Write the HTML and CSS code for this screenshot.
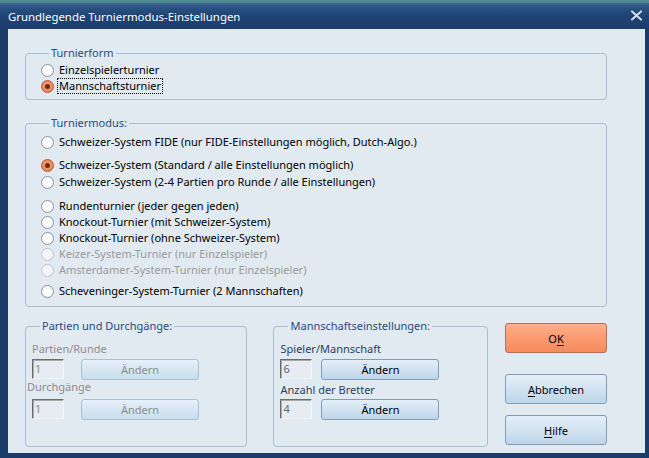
FILE: index.html
```html
<!DOCTYPE html>
<html lang="de">
<head>
<meta charset="utf-8">
<title>Grundlegende Turniermodus-Einstellungen</title>
<link rel="stylesheet" href="styles.css">
</head>
<body>
<div class="window">
  <div class="titlebar">
    <span class="title">Grundlegende Turniermodus-Einstellungen</span>
    <span class="close">
      <svg width="13" height="11" viewBox="0 0 13 11"><path d="M2 1.5 L11 9.5 M11 1.5 L2 9.5" stroke="#0d2240" stroke-width="3.2" stroke-linecap="round" fill="none" opacity="0.5"/><path d="M2 1.5 L11 9.5 M11 1.5 L2 9.5" stroke="#cfe0f1" stroke-width="2.2" stroke-linecap="round" fill="none"/></svg>
    </span>
  </div>
  <div class="client">
    <fieldset class="group g-form">
      <legend>Turnierform</legend>
      <div class="radio"><span class="dot"></span><span class="lbl">Einzelspielerturnier</span></div>
      <div class="radio checked"><span class="dot"></span><span class="lbl focus">Mannschaftsturnier</span></div>
    </fieldset>

    <fieldset class="group g-mode">
      <legend>Turniermodus:</legend>
      <div class="radio"><span class="dot"></span><span class="lbl">Schweizer-System FIDE (nur FIDE-Einstellungen möglich, Dutch-Algo.)</span></div>
      <div class="radio checked sp7"><span class="dot"></span><span class="lbl">Schweizer-System (Standard / alle Einstellungen möglich)</span></div>
      <div class="radio sp1"><span class="dot"></span><span class="lbl">Schweizer-System (2-4 Partien pro Runde / alle Einstellungen)</span></div>
      <div class="radio sp8"><span class="dot"></span><span class="lbl">Rundenturnier (jeder gegen jeden)</span></div>
      <div class="radio"><span class="dot"></span><span class="lbl">Knockout-Turnier (mit Schweizer-System)</span></div>
      <div class="radio"><span class="dot"></span><span class="lbl">Knockout-Turnier (ohne Schweizer-System)</span></div>
      <div class="radio disabled"><span class="dot"></span><span class="lbl">Keizer-System-Turnier (nur Einzelspieler)</span></div>
      <div class="radio disabled"><span class="dot"></span><span class="lbl">Amsterdamer-System-Turnier (nur Einzelspieler)</span></div>
      <div class="radio sp5"><span class="dot"></span><span class="lbl">Scheveninger-System-Turnier (2 Mannschaften)</span></div>
    </fieldset>

    <div class="bottom">
      <fieldset class="group g-games disabled">
        <legend>Partien und Durchgänge:</legend>
        <div class="flabel">Partien/Runde</div>
        <div class="frow">
          <span class="input">1</span>
          <span class="btn small">Ändern</span>
        </div>
        <div class="flabel outdent">Durchgänge</div>
        <div class="frow r2">
          <span class="input">1</span>
          <span class="btn small">Ändern</span>
        </div>
      </fieldset>

      <fieldset class="group g-team">
        <legend>Mannschaftseinstellungen:</legend>
        <div class="flabel">Spieler/Mannschaft</div>
        <div class="frow">
          <span class="input">6</span>
          <span class="btn small">Ändern</span>
        </div>
        <div class="flabel l2">Anzahl der Bretter</div>
        <div class="frow r2b">
          <span class="input">4</span>
          <span class="btn small">Ändern</span>
        </div>
      </fieldset>

      <div class="buttons">
        <span class="btn big ok">O<u>K</u></span>
        <span class="btn big cancel"><u>A</u>bbrechen</span>
        <span class="btn big help"><u>H</u>ilfe</span>
      </div>
    </div>
  </div>
</div>
</body>
</html>
```

FILE: styles.css
```css
html, body {
  margin: 0;
  padding: 0;
}
body {
  background: #4f8a92;
  font-family: "Noto Sans", "Open Sans", sans-serif;
  font-size: 11px;
  color: #000;
  width: 649px;
  height: 458px;
  overflow: hidden;
}
.window {
  margin-top: 3px;
  width: 649px;
  height: 455px;
  box-sizing: border-box;
  padding: 0 4px 5px 8px;
  background: #1b3b69;
  display: flex;
  flex-direction: column;
}
.titlebar {
  height: 26px;
  margin: 0 -4px 0 -8px;
  padding: 0 6px 0 8px;
  display: flex;
  align-items: center;
  justify-content: space-between;
  background: linear-gradient(#3d6797 0px, #2b5384 4px, #1f4575 12px, #1b3c6b 26px);
}
.title {
  color: #fff;
  font-size: 11.4px;
  letter-spacing: 0;
  padding-top: 1px;
}
.close {
  display: flex;
  margin-top: -1px;
}
.client {
  flex: 1;
  background: #e1e9f1;
  padding: 17px 38px 0 17px;
}
.group {
  margin: 0;
  padding: 0 0 0 15px;
  border: 1px solid #a6bfd8;
  border-radius: 4px;
  min-width: 0;
  box-sizing: border-box;
}
.group legend {
  margin-left: 8px;
  padding: 0 2px;
  line-height: 14px;
  color: #2b4a7e;
}
.g-form {
  width: 582px;
  padding-top: 2px;
  padding-bottom: 5px;
}
.g-mode {
  width: 582px;
  margin-top: 16px;
  padding-top: 4px;
  padding-bottom: 7px;
}
.radio {
  height: 16px;
  display: flex;
  align-items: center;
}
.radio.sp7 { margin-top: 7px; }
.radio.sp1 { margin-top: 1px; }
.radio.sp8 { margin-top: 8px; }
.radio.sp5 { margin-top: 5px; }
.dot {
  width: 13px;
  height: 13px;
  box-sizing: border-box;
  border-radius: 50%;
  border: 1px solid #8795a8;
  background: radial-gradient(circle at 50% 40%, #ffffff 55%, #e8eef5 100%);
  margin-right: 5px;
  flex: none;
  display: flex;
  align-items: center;
  justify-content: center;
}
.checked .dot {
  border-color: #b8532e;
  background: radial-gradient(circle at 50% 45%, #f39a72 30%, #e4713f 100%);
}
.checked .dot::after {
  content: "";
  width: 5px;
  height: 5px;
  border-radius: 50%;
  background: #6e2a14;
}
.disabled .dot {
  border-color: #b7c3d0;
  background: #f2f5f8;
}
.radio.disabled .lbl {
  color: #9a9a9a;
}
.lbl {
  white-space: nowrap;
  line-height: 16px;
}
.lbl.focus {
  outline: 1px dotted #000;
  outline-offset: 0;
  padding: 0 1px;
  margin-left: -1px;
  line-height: 14px;
}
.bottom {
  display: flex;
  align-items: flex-start;
  margin-top: 12px;
}
.g-games, .g-team {
  height: 128px;
  padding: 9px 0 0 6px;
}
.g-games {
  width: 223px;
}
.g-team {
  width: 215px;
  margin-left: 26px;
}
.flabel {
  line-height: 14px;
  height: 14px;
  white-space: nowrap;
}
.flabel.outdent {
  margin-left: -5px;
}
.g-games .flabel {
  color: #8d8d8d;
}
.g-team .flabel {
  color: #2b3f5e;
}
.frow {
  display: flex;
  align-items: flex-start;
  margin-top: 3px;
  gap: 17px;
}
.frow.r2 { margin-top: 5px; }
.flabel.l2 { margin-top: 3px; }
.frow.r2b { margin-top: 2px; }
.input {
  width: 32px;
  height: 20px;
  box-sizing: border-box;
  border: 1px solid;
  border-color: #6c6c6c #f2f5f8 #f2f5f8 #6c6c6c;
  box-shadow: inset 1px 1px 0 #a9a9a9;
  background: #e6ecf2;
  padding-left: 2px;
  line-height: 17px;
  color: #666;
}
.g-games .input { color: #888; }
.g-team .frow { gap: 9px; }
.btn {
  box-sizing: border-box;
  display: flex;
  align-items: center;
  justify-content: center;
  border: 1px solid #7f9cb9;
  border-radius: 3px;
  background: linear-gradient(#e3eef8, #d2e3f1 50%, #bdd5e9);
  white-space: nowrap;
}
.btn.small {
  width: 118px;
  height: 21px;
}
.g-games .btn {
  color: #8d8d8d;
  border-color: #a8c0d6;
  background: linear-gradient(#e6f0f9, #d6e6f3 50%, #c8ddee);
}
.buttons {
  margin-left: 17px;
  margin-top: 4px;
  display: flex;
  flex-direction: column;
}
.btn.big {
  width: 102px;
  height: 30px;
}
.btn.ok {
  border-color: #b0705a;
  background: linear-gradient(#ffb08c, #fc9a70 50%, #f68a5d);
}
.btn.cancel { margin-top: 21px; }
.btn.help { margin-top: 11px; }
u {
  text-decoration: underline;
  text-underline-offset: 2px;
}
```
